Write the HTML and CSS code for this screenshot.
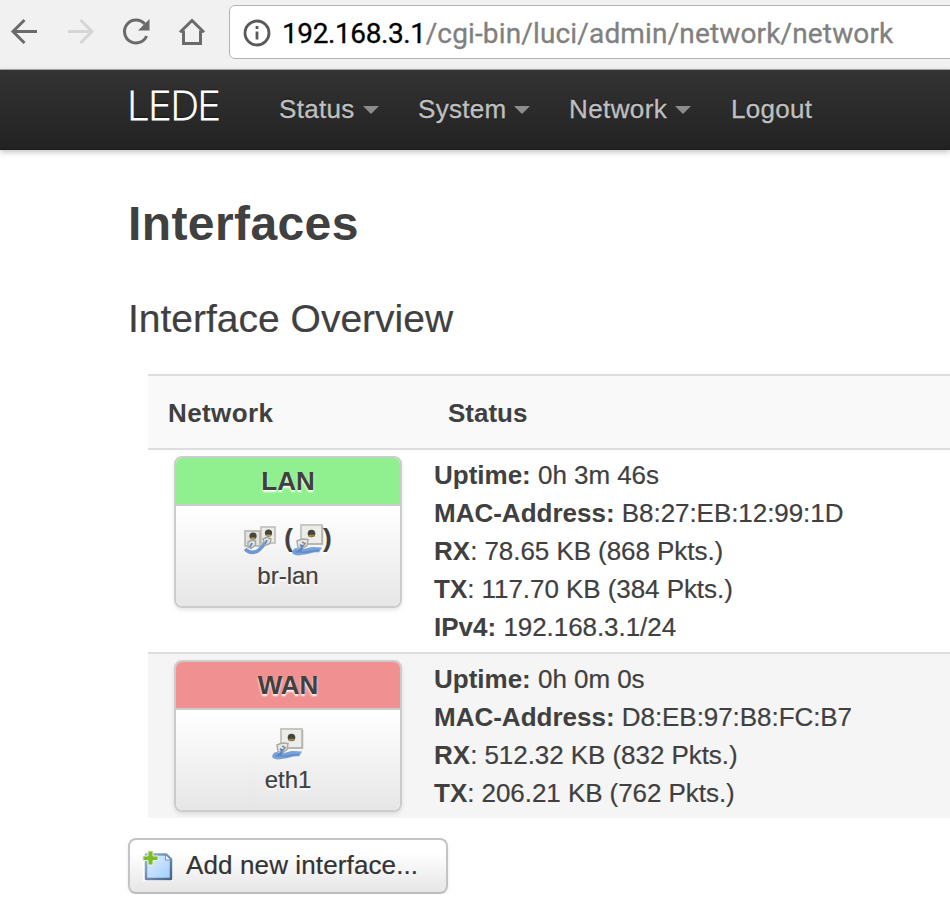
FILE: index.html
```html
<!DOCTYPE html>
<html lang="en">
<head>
<meta charset="utf-8">
<title>LEDE - Interfaces</title>
<link rel="stylesheet" href="styles.css">
</head>
<body>
<svg class="defs" width="0" height="0" aria-hidden="true">
  <defs>
    <linearGradient id="sheet" x1="0" y1="0" x2="1" y2="1"><stop offset="0" stop-color="#e3f1ff"/><stop offset="1" stop-color="#9fcdfb"/></linearGradient>
    <linearGradient id="edge" x1="0" y1="0" x2="1" y2="1"><stop offset="0" stop-color="#8fb4dc"/><stop offset="1" stop-color="#4c617f"/></linearGradient>
    <symbol id="eth" viewBox="0 0 32 32">
      <rect x="9" y="1" width="21" height="19" fill="#ecece8" stroke="#c6c6c3" stroke-width="2"/>
      <path d="M10 20h20.500V2" fill="none" stroke="#b2b2af" stroke-width="1.500"/>
      <circle cx="19.500" cy="9.500" r="3.800" fill="#45453e"/>
      <path d="M16.500 10.800h6v2h-6z" fill="#9c8c40"/>
      <path d="M0 29c1-5 4-6 8-4 5 1 9-2 13-2l9 .5-3 5c-6-1-9 2-14 2-4 0-8 3-13-1.500z" fill="#79a3d8"/>
      <path d="M3 28c5-1 7 1 12 0s8-2 12-1.500" fill="none" stroke="#5f8cc8" stroke-width="1.500"/>
      <path d="M5 17l5-2 6 .5-1 6-5 3.500-4-1.500z" fill="#e8e8e5" stroke="#aaaaa7" stroke-width="1.500"/>
      <path d="M10 18l3 1.500-2 3" fill="none" stroke="#8a8a88" stroke-width="1.500"/>
      <path d="M8 21l2 1-1 4-3 1" fill="none" stroke="#5484c2" stroke-width="2.200"/>
    </symbol>
    <symbol id="bridge" viewBox="0 0 32 32">
      <rect x="17" y="3" width="14" height="16" fill="#ecebe7" stroke="#bdbdba" stroke-width="1.600"/>
      <rect x="1" y="7" width="15" height="15" fill="#e2e2df" stroke="#b3b3b0" stroke-width="1.600"/>
      <circle cx="24.500" cy="9" r="3.600" fill="#45453e"/><path d="M22 10.500h5v2h-5z" fill="#a8984a"/>
      <circle cx="9" cy="12" r="3.600" fill="#45453e"/><path d="M6.500 13.500h5v2h-5z" fill="#a8984a"/>
      <path d="M1 25c4 4.500 11 4.500 15 0 3-3 4-6 7-6.500" fill="none" stroke="#6c99d2" stroke-width="3.600"/>
      <path d="M4 18l4-2 3.500 1v4l-4.500 3.500-3-1.500zM19 15l4-2 4 2-1 4.500-5 2z" fill="#e2e2df" stroke="#a5a5a3" stroke-width="1.400"/>
      <path d="M8 19l-2 4M23 16l-2 4" stroke="#5f8cc8" stroke-width="1.800"/>
    </symbol>
  </defs>
</svg>
<header class="toolbar">
  <svg class="tool back" viewBox="0 0 28 28"><path d="M27 13.500H3M14.500 2L3 13.500 14.500 25"/></svg>
  <svg class="tool forward" viewBox="0 0 28 28"><path d="M1 13.500h24M13.500 2L25 13.500 13.500 25"/></svg>
  <svg class="tool reload" viewBox="0 0 28 28"><path d="M22.800 6A11.500 11.500 0 1 0 24.600 18"/><path class="solid" d="M27.500 1v11.500H16z"/></svg>
  <svg class="tool home" viewBox="0 0 28 28"><path class="roof" d="M2 14.200L14 2.500l12 11.700"/><path d="M5.500 12.500v13h17v-13"/></svg>
  <div class="address">
    <svg class="info" viewBox="0 0 28 28"><circle cx="14" cy="14" r="12"/><path d="M14 12.500v8M14 7v3"/></svg>
    <span class="url"><span class="host">192.168.3.1</span><span class="path">/cgi-bin/luci/admin/network/network</span></span>
  </div>
</header>
<nav class="navbar">
  <span class="brand">LEDE</span>
  <span class="item status">Status<i class="caret"></i></span>
  <span class="item system">System<i class="caret"></i></span>
  <span class="item network">Network<i class="caret"></i></span>
  <span class="item logout">Logout</span>
</nav>
<main>
  <h2><span>Interfaces</span></h2>
  <h3><span>Interface Overview</span></h3>
  <section class="table">
    <div class="row head"><span class="wide">Network</span><span>Status</span></div>
    <div class="row">
      <div class="ifacebox">
        <div class="zone lan"><span>LAN</span></div>
        <div class="device">
          <div class="ports"><svg class="port"><use href="#bridge"/></svg><b class="paren open">(</b><svg class="port inner"><use href="#eth"/></svg><b class="paren">)</b></div>
          <span class="dev">br-lan</span>
        </div>
      </div>
      <div class="info-list">
        <div><b>Uptime:</b> <span>0h 3m 46s</span></div>
        <div><b>MAC-Address:</b> <span>B8:27:EB:12:99:1D</span></div>
        <div><b>RX</b><span>: 78.65 KB (868 Pkts.)</span></div>
        <div><b>TX</b><span>: 117.70 KB (384 Pkts.)</span></div>
        <div><b>IPv4:</b> <span>192.168.3.1/24</span></div>
      </div>
    </div>
    <div class="row alt">
      <div class="ifacebox">
        <div class="zone wan"><span>WAN</span></div>
        <div class="device">
          <div class="ports"><svg class="port"><use href="#eth"/></svg></div>
          <span class="dev">eth1</span>
        </div>
      </div>
      <div class="info-list">
        <div><b>Uptime:</b> <span>0h 0m 0s</span></div>
        <div><b>MAC-Address:</b> <span>D8:EB:97:B8:FC:B7</span></div>
        <div><b>RX</b><span>: 512.32 KB (832 Pkts.)</span></div>
        <div><b>TX</b><span>: 206.21 KB (762 Pkts.)</span></div>
      </div>
    </div>
  </section>
  <button class="add">
    <svg class="page" viewBox="0 0 32 32"><path d="M1 3h27l3 3v25H1z" fill="#fff"/><path d="M4 4.500h20l5 5v19.500H4z" fill="url(#sheet)" stroke="url(#edge)" stroke-width="2.500" stroke-linejoin="round"/><path d="M23.500 4.500v5.500h5.500z" fill="#e8f3ff" stroke="#7195bf"/><path d="M6 1h5v5h5v4.500h-5V15H6v-4.500H1V6h5z" fill="#7dbb2c" stroke="#e4f1d2" stroke-width="1"/></svg>
    <span>Add new interface...</span>
  </button>
</main>
</body>
</html>
```
FILE: styles.css
```css
* { box-sizing: border-box; }
body { margin: 0; background: #fff; color: #404040; font: 26px/38px "Liberation Sans", Arial, sans-serif; overflow: hidden; }
.defs { display: block; height: 0; }

.toolbar { display: flex; height: 70px; padding: 5px 0 0 10px; background: #f1f1f1; border-bottom: 1px solid #acacac; }
.tool { width: 28px; height: 28px; margin-top: 13px; fill: none; stroke: #6a6a6a; stroke-width: 3; flex: none; }
.forward { margin-left: 29px; stroke: #d5d5d5; }
.reload { margin-left: 27px; }
.home { margin-left: 28px; }
.solid { fill: #6a6a6a; stroke: none; }
.address { display: flex; width: 740px; height: 54px; margin-left: 23px; flex: none; background: #fff; border: 1px solid #b3b3b3; border-radius: 6px; }
.info { width: 28px; height: 28px; margin: 13px 0 0 13px; fill: none; stroke: #5a5a5a; stroke-width: 2.8; }
.url { margin-left: 11px; font: 28px/56px Roboto, sans-serif; white-space: nowrap; }
.host { color: #000; letter-spacing: -0.4px; -webkit-text-stroke: 0.3px; }
.path { color: #808080; letter-spacing: 0.15px; -webkit-text-stroke: 0.3px; }

.navbar { display: flex; height: 80px; padding-left: 128px; background: linear-gradient(#333, #222); box-shadow: 0 2px 6px rgba(0,0,0,.25), inset 0 -2px 0 rgba(0,0,0,.1); color: #bfbfbf; line-height: 78px; text-shadow: 0 -2px 0 rgba(0,0,0,.25); -webkit-text-stroke: 0.3px; }
.brand { width: 151px; margin-left: -1px; margin-right: 1px; color: #fff; font: 200 40px/72px Inter, sans-serif; letter-spacing: -1.5px; -webkit-text-stroke: 0.8px; }
.item { display: flex; align-items: center; height: 78px; white-space: nowrap; letter-spacing: 0.3px; }
.caret { margin-left: 8px; border: 8px solid transparent; border-top-color: #8c8c8c; border-bottom: 0; margin-top: 2px; }
.status { width: 139px; }
.system { width: 151px; }
.network { width: 162px; letter-spacing: 0.4px; }

main { padding-left: 128px; }
h2 { margin: 0; padding-top: 38px; font-size: 48px; line-height: 72px; height: 109px; letter-spacing: 0.4px; }
h3 { margin: 0; padding-top: 24px; font-size: 39px; font-weight: 400; line-height: 72px; height: 115px; -webkit-text-stroke: 0.2px; }
.table { margin-left: 20px; }
.row { display: flex; border-top: 2px solid #ddd; padding: 6px 0 6px 26px; }
.head { height: 74px; padding: 0 0 0 20px; line-height: 75px; background: #f9f9f9; font-weight: 700; }
.wide { width: 280px; letter-spacing: 0.4px; }
.alt { background: #f5f5f5; }
.ifacebox { width: 228px; height: 152px; border: 2px solid #ccc; border-radius: 8px; overflow: hidden; text-align: center; box-shadow: 0 2px 4px rgba(0,0,0,.1); text-shadow: 0 2px 2px #fff; }
.zone { height: 48px; border-bottom: 2px solid #ccc; font-weight: 700; line-height: 46px; }
.lan { background: #90f090; }
.wan { background: #f09090; }
.device { height: 100px; padding-top: 15px; background: linear-gradient(#fff, #e6e6e6); font-size: 24px; -webkit-text-stroke: 0.2px; }
.ports { display: flex; justify-content: center; height: 36px; font-size: 26px; }
.port { width: 32px; height: 32px; margin-top: 3px; }
.paren { line-height: 34px; }
.open { margin-left: 8px; }
.inner { margin: 3px -1px 0; }
.info-list { margin-left: 32px; white-space: nowrap; }
.info-list span { letter-spacing: -0.06px; -webkit-text-stroke: 0.2px; }
.add { display: flex; width: 320px; height: 56px; margin-top: 20px; padding: 0 0 0 12px; align-items: center; border: 2px solid #c4c4c4; border-bottom-color: #bbb; border-radius: 8px; background: linear-gradient(#fff 25%, #e6e6e6); color: #333; font: 26px/50px "Liberation Sans", Arial, sans-serif; letter-spacing: 0.12px; box-shadow: 0 2px 4px rgba(0,0,0,.07); white-space: nowrap; -webkit-text-stroke: 0.2px; }
.add span { height: 52px; }
.page { width: 32px; height: 32px; margin-right: 12px; }
```
